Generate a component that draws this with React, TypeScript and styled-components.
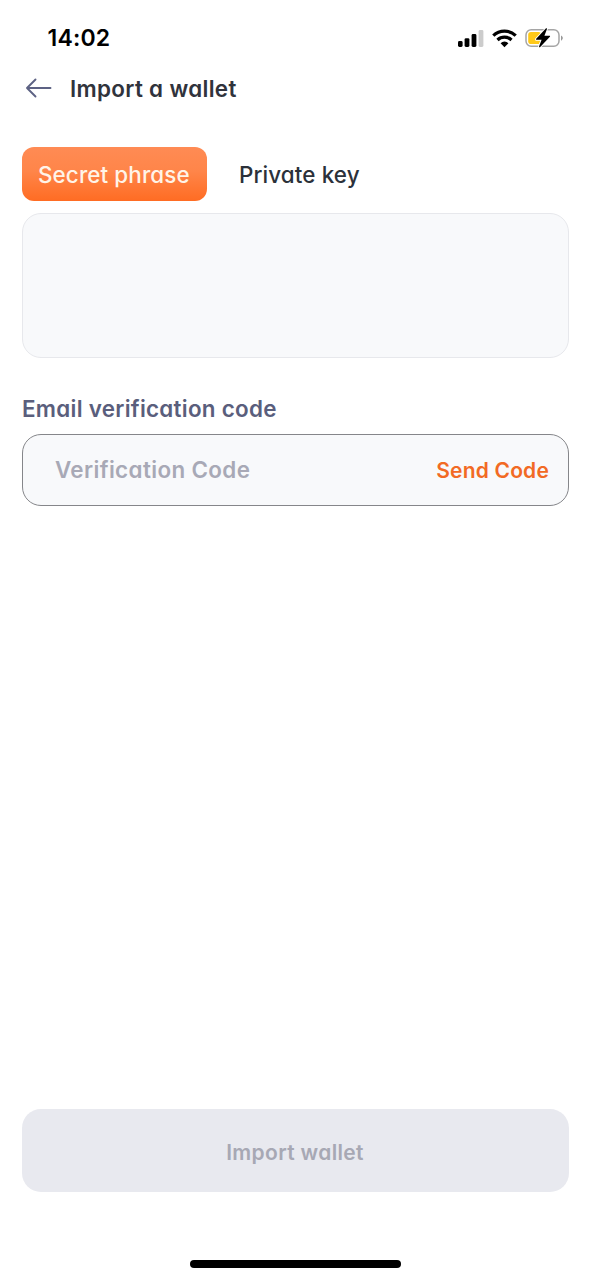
import React from 'react';
import styled, { createGlobalStyle } from 'styled-components';

const GlobalStyle = createGlobalStyle`
  * { box-sizing: border-box; }
  body {
    margin: 0;
    background: #fff;
    font-family: Inter, "Liberation Sans", sans-serif;
    font-feature-settings: "cv11" 1;
    -webkit-font-smoothing: antialiased;
  }
  button, input, textarea { font: inherit; font-feature-settings: inherit; margin: 0; }
`;

const Screen = styled.main`
  display: flex;
  flex-direction: column;
  width: 591px;
  height: 1280px;
  padding: 0 22px;
  background: #fff;
`;

const StatusBar = styled.div`
  display: flex;
  align-items: center;
  justify-content: space-between;
  height: 66px;
  padding: 10px 4px 0 25.5px;
`;

const Clock = styled.time`
  font-size: 23px;
  font-weight: 600;
  line-height: 28px;
  letter-spacing: 0.2px;
  color: #000;
`;

const StatusIcons = styled.div`
  display: flex;
  align-items: center;
`;

const Header = styled.header`
  display: flex;
  align-items: center;
  height: 46px;
  gap: 18px;
`;

const BackButton = styled.button`
  display: flex;
  width: 30px;
  height: 30px;
  padding: 0;
  border: 0;
  background: none;
`;

const Title = styled.h1`
  margin: 0;
  font-size: 22.4px;
  font-weight: 600;
  line-height: 30px;
  letter-spacing: 0.33px;
  color: #30333c;
`;

const Tabs = styled.div`
  display: flex;
  gap: 16px;
  height: 54px;
  margin-top: 35px;
`;

const Tab = styled.button<{ $active?: boolean }>`
  width: 185px;
  height: 54px;
  padding: 1px 0 0 16px;
  border: 0;
  border-radius: 12px;
  background: ${(p) => (p.$active ? 'linear-gradient(180deg, #ff8b54 0%, #ff8549 45%, #ff6c23 100%)' : 'none')};
  color: ${(p) => (p.$active ? '#fff4e8' : '#2b313a')};
  font-size: 22.4px;
  font-weight: 500;
  letter-spacing: 0.12px;
  text-align: left;
  white-space: nowrap;
`;

const PhraseInput = styled.textarea`
  display: block;
  width: 547px;
  height: 145px;
  flex: none;
  margin-top: 12px;
  padding: 20px;
  border: 1.5px solid #e7e8ec;
  border-radius: 19px;
  background: #f8f9fb;
  resize: none;
  outline: none;
`;

const FieldLabel = styled.label`
  margin-top: 36px;
  font-size: 22.4px;
  font-weight: 600;
  line-height: 30px;
  letter-spacing: 0.28px;
  color: #5a5e7c;
  white-space: nowrap;
`;

const CodeField = styled.div`
  display: flex;
  align-items: center;
  flex: none;
  height: 72px;
  margin-top: 10px;
  padding: 0 19px 0 32px;
  border: 1px solid #85868a;
  border-radius: 19px;
  background: #f8f9fb;
`;

const CodeInput = styled.input`
  flex: 1;
  min-width: 0;
  height: 40px;
  padding: 0 0 2px;
  border: 0;
  outline: none;
  background: none;
  font-size: 22.4px;
  font-weight: 600;
  letter-spacing: 0.37px;
  &::placeholder { color: #a8a9b6; opacity: 1; }
`;

const SendCode = styled.button`
  padding: 2px 0 0;
  border: 0;
  background: none;
  color: #f26a24;
  font-size: 21px;
  font-weight: 600;
  line-height: 30px;
  letter-spacing: 0.18px;
  white-space: nowrap;
`;

const SubmitButton = styled.button`
  flex: none;
  height: 83px;
  margin-top: auto;
  padding: 3px 1px 0 0;
  border: 0;
  border-radius: 19px;
  background: #e8e9ef;
  color: #a7a8b4;
  font-size: 21px;
  font-weight: 600;
  letter-spacing: 0.33px;
`;

const HomeIndicator = styled.div`
  flex: none;
  align-self: center;
  width: 211px;
  height: 8px;
  margin: 68px 0 12px;
  border-radius: 4px;
  background: #000;
`;

const StatusGlyphs = () => (
  <svg width="108" height="24" viewBox="0 0 108 24" aria-hidden="true">
    <rect x="1" y="15" width="4.6" height="6" rx="1.4" fill="#000" />
    <rect x="7.6" y="12.2" width="4.8" height="8.8" rx="1.4" fill="#000" />
    <rect x="14.6" y="8" width="4.8" height="13" rx="1.4" fill="#000" />
    <rect x="21.6" y="4" width="4.8" height="17" rx="1.4" fill="#ccc" />
    <g fill="none" stroke="#000" strokeWidth="3.2">
      <path d="M36.3 9.7a16 16 0 0 1 22.4 0" />
      <path d="M40.5 14a10 10 0 0 1 14 0" />
    </g>
    <path d="M43.6 17.2a5.6 5.6 0 0 1 7.8 0L47.5 21.3z" fill="#000" />
    <rect x="69" y="3.8" width="33" height="16.4" rx="5.2" fill="none" stroke="#a5a5a5" strokeWidth="1.5" />
    <path d="M104 9.5v5.2c1-.4 1.8-1.4 1.8-2.6s-.8-2.2-1.8-2.6z" fill="#999" />
    <rect x="71.2" y="6" width="13" height="12" rx="2.8" fill="#ffc918" />
    <path
      d="M88.8 2.6 79.2 12.8c-.4.5-.1 1 .4 1h5l-2.5 6.5c-.3.9.5 1.3 1.1.6l9.7-10.2c.4-.5.1-1-.5-1h-5l2.5-6.5c.3-.9-.5-1.3-1.1-.6z"
      fill="#000"
      stroke="#fff"
      strokeWidth="2"
      paintOrder="stroke"
    />
  </svg>
);

const BackArrow = () => (
  <svg width="30" height="30" viewBox="0 0 30 30" fill="none" stroke="#5d6284" strokeWidth="1.9" strokeLinecap="round" strokeLinejoin="round" aria-hidden="true">
    <path d="M28.5 14H5M13.5 5.5 5 14l8.5 8.5" />
  </svg>
);

export default function App() {
  return (
    <>
      <GlobalStyle />
      <Screen>
        <StatusBar>
          <Clock>14:02</Clock>
          <StatusIcons>
            <StatusGlyphs />
          </StatusIcons>
        </StatusBar>
        <Header>
          <BackButton aria-label="Back">
            <BackArrow />
          </BackButton>
          <Title>Import a wallet</Title>
        </Header>
        <Tabs>
          <Tab $active>Secret phrase</Tab>
          <Tab>Private key</Tab>
        </Tabs>
        <PhraseInput aria-label="Secret phrase" />
        <FieldLabel htmlFor="code">Email verification code</FieldLabel>
        <CodeField>
          <CodeInput id="code" placeholder="Verification Code" />
          <SendCode>Send Code</SendCode>
        </CodeField>
        <SubmitButton>Import wallet</SubmitButton>
        <HomeIndicator />
      </Screen>
    </>
  );
}
